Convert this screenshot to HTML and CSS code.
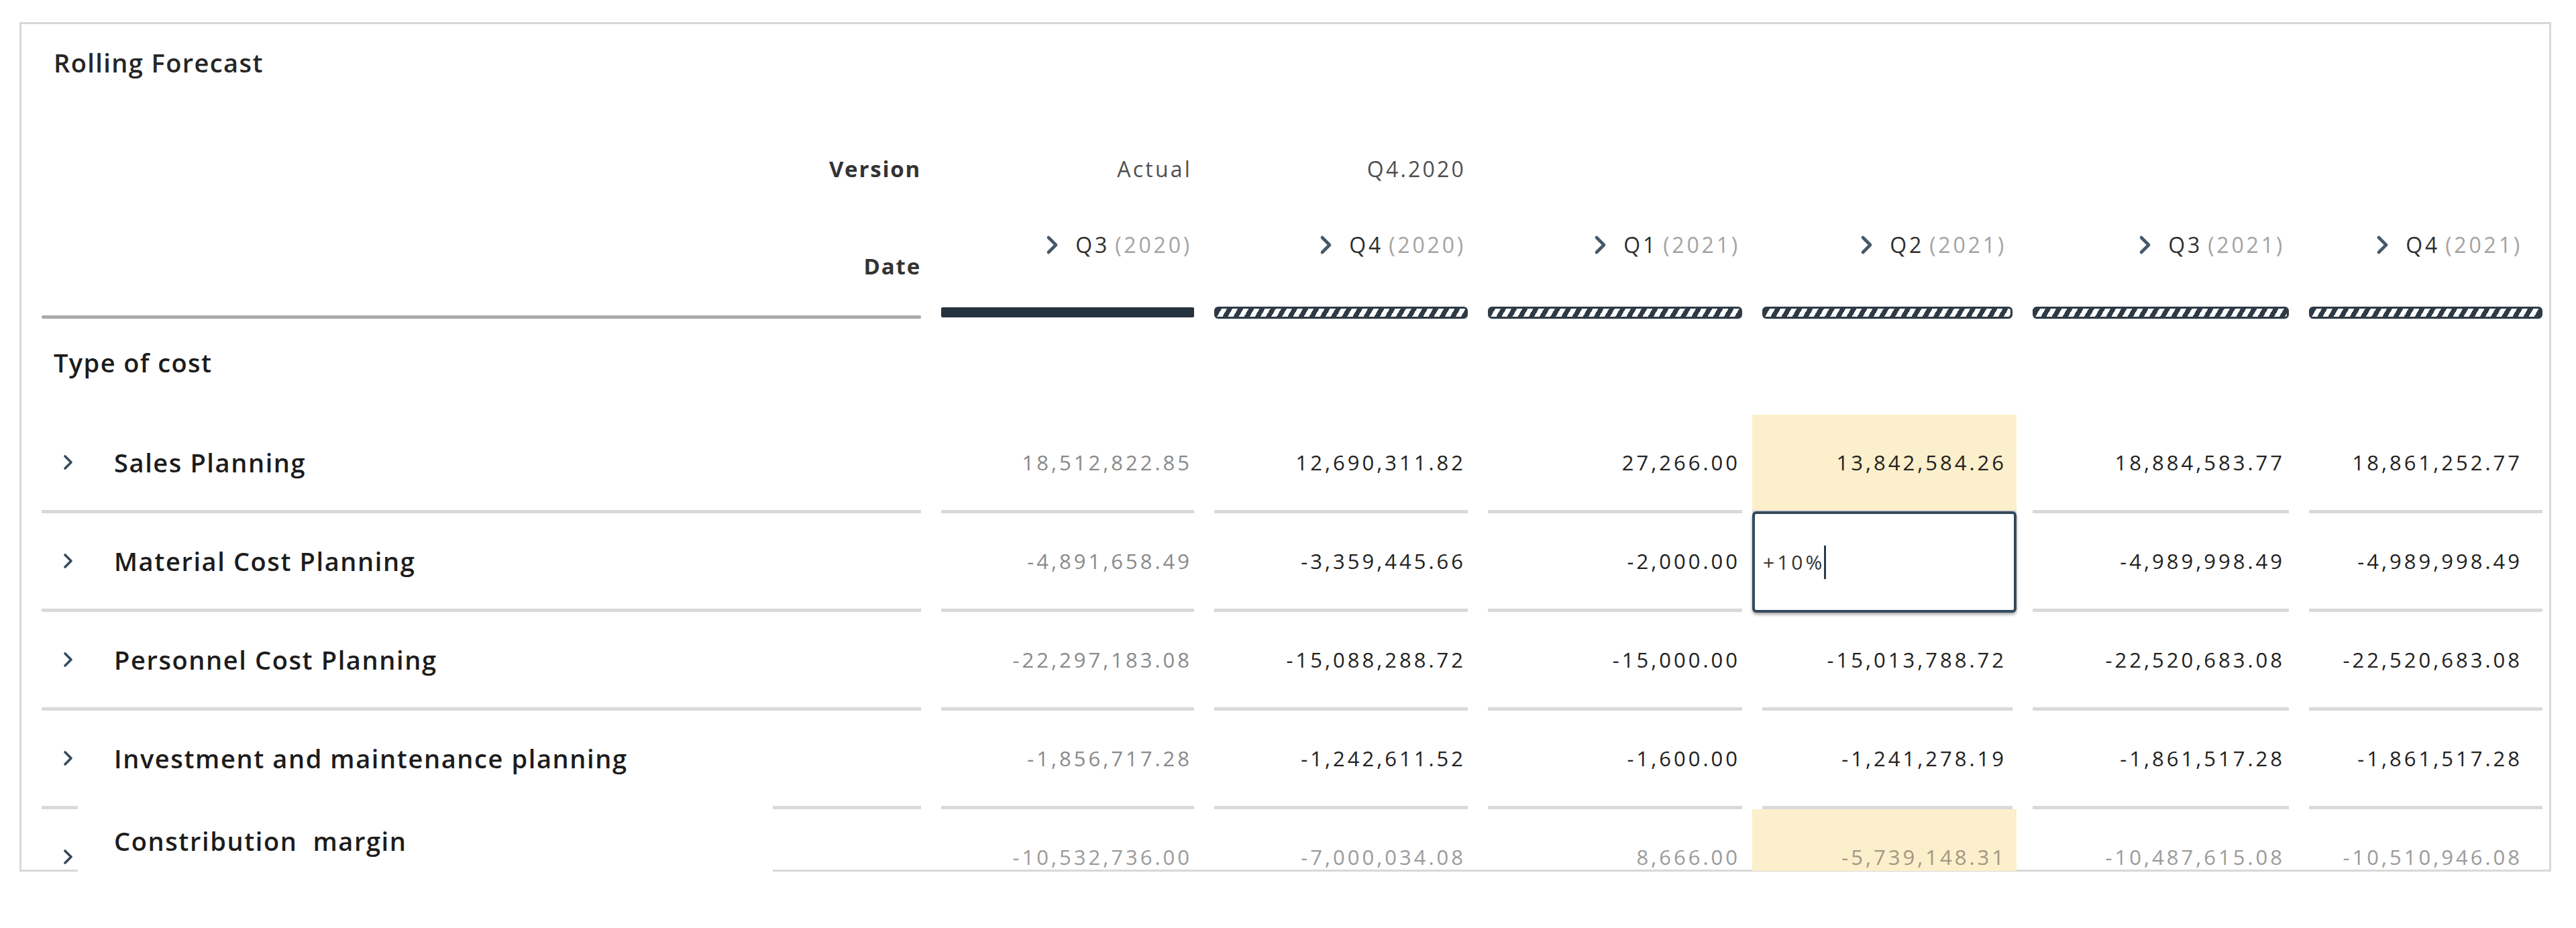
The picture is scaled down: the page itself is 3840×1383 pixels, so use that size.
FILE: index.html
```html
<!DOCTYPE html>
<html lang="en">
<head>
<meta charset="utf-8">
<title>Rolling Forecast</title>
<link rel="stylesheet" href="styles.css">
</head>
<body>
<div class="card">
  <div class="title">Rolling Forecast</div>

  <div class="grid version-row">
    <div class="dim-label">Version</div>
    <div class="hdr-val">Actual</div>
    <div class="hdr-val">Q4.2020</div>
    <div></div><div></div><div></div><div></div>
  </div>

  <div class="grid date-row">
    <div class="dim-label date-label">Date</div>
    <div class="date-hdr"><svg class="hchev" viewBox="0 0 20 30"><polyline points="4,4 15,15 4,26"/></svg><span class="q">Q3</span><span class="yr">(2020)</span></div>
    <div class="date-hdr"><svg class="hchev" viewBox="0 0 20 30"><polyline points="4,4 15,15 4,26"/></svg><span class="q">Q4</span><span class="yr">(2020)</span></div>
    <div class="date-hdr"><svg class="hchev" viewBox="0 0 20 30"><polyline points="4,4 15,15 4,26"/></svg><span class="q">Q1</span><span class="yr">(2021)</span></div>
    <div class="date-hdr"><svg class="hchev" viewBox="0 0 20 30"><polyline points="4,4 15,15 4,26"/></svg><span class="q">Q2</span><span class="yr">(2021)</span></div>
    <div class="date-hdr"><svg class="hchev" viewBox="0 0 20 30"><polyline points="4,4 15,15 4,26"/></svg><span class="q">Q3</span><span class="yr">(2021)</span></div>
    <div class="date-hdr"><svg class="hchev" viewBox="0 0 20 30"><polyline points="4,4 15,15 4,26"/></svg><span class="q">Q4</span><span class="yr">(2021)</span></div>
  </div>

  <div class="grid bar-row">
    <div class="label-rule"></div>
    <div class="bar solid"></div>
    <div class="bar hatched"></div>
    <div class="bar hatched"></div>
    <div class="bar hatched"></div>
    <div class="bar hatched"></div>
    <div class="bar hatched"></div>
  </div>

  <div class="grid type-row">
    <div class="type-label">Type of cost</div>
  </div>

  <div class="grid data-row">
    <div class="cell label"><svg class="chev" viewBox="0 0 24 28"><polyline points="8,5 17,14 8,23"/></svg><span>Sales Planning</span></div>
    <div class="cell num actual">18,512,822.85</div>
    <div class="cell num">12,690,311.82</div>
    <div class="cell num">27,266.00</div>
    <div class="cell num hl">13,842,584.26</div>
    <div class="cell num">18,884,583.77</div>
    <div class="cell num">18,861,252.77</div>
  </div>

  <div class="grid data-row">
    <div class="cell label"><svg class="chev" viewBox="0 0 24 28"><polyline points="8,5 17,14 8,23"/></svg><span>Material Cost Planning</span></div>
    <div class="cell num actual">-4,891,658.49</div>
    <div class="cell num">-3,359,445.66</div>
    <div class="cell num">-2,000.00</div>
    <div class="cell edit"><span class="edit-text">+10%</span><span class="caret"></span></div>
    <div class="cell num">-4,989,998.49</div>
    <div class="cell num">-4,989,998.49</div>
  </div>

  <div class="grid data-row">
    <div class="cell label"><svg class="chev" viewBox="0 0 24 28"><polyline points="8,5 17,14 8,23"/></svg><span>Personnel Cost Planning</span></div>
    <div class="cell num actual">-22,297,183.08</div>
    <div class="cell num">-15,088,288.72</div>
    <div class="cell num">-15,000.00</div>
    <div class="cell num">-15,013,788.72</div>
    <div class="cell num">-22,520,683.08</div>
    <div class="cell num">-22,520,683.08</div>
  </div>

  <div class="grid data-row">
    <div class="cell label"><svg class="chev" viewBox="0 0 24 28"><polyline points="8,5 17,14 8,23"/></svg><span>Investment and maintenance planning</span></div>
    <div class="cell num actual">-1,856,717.28</div>
    <div class="cell num">-1,242,611.52</div>
    <div class="cell num">-1,600.00</div>
    <div class="cell num">-1,241,278.19</div>
    <div class="cell num">-1,861,517.28</div>
    <div class="cell num">-1,861,517.28</div>
  </div>

  <div class="grid data-row last">
    <div class="cell label"><svg class="chev" viewBox="0 0 24 28"><polyline points="8,5 17,14 8,23"/></svg><span class="label-patch">Constribution  margin</span></div>
    <div class="cell num">-10,532,736.00</div>
    <div class="cell num">-7,000,034.08</div>
    <div class="cell num">8,666.00</div>
    <div class="cell num hl">-5,739,148.31</div>
    <div class="cell num">-10,487,615.08</div>
    <div class="cell num">-10,510,946.08</div>
  </div>
</div>
</body>
</html>
```

FILE: styles.css
```css
* { box-sizing: border-box; }

html, body {
  margin: 0;
  background: #ffffff;
}

body {
  font-family: "Open Sans", "Noto Sans", sans-serif;
  color: #1c1c1c;
}

.card {
  margin: 33px 0 0 29px;
  width: 3774px;
  border: 3px solid #d8d8d8;
  background: #ffffff;
  padding: 0 13px 0 30px;
}

.title {
  margin: 33px 0 0 18px;
  font-size: 38px;
  font-weight: 600;
  line-height: 48px;
  letter-spacing: 1.4px;
  color: #262626;
}

.grid {
  display: grid;
  grid-template-columns: 1311px 377px 378px 379px 373px 382px 348px;
  column-gap: 30px;
}

/* per-column right insets of the numbers (as measured) */
.grid > :nth-child(2),
.grid > :nth-child(3),
.grid > :nth-child(4) { padding-right: 3px; }
.grid > :nth-child(5) { padding-right: 9px; }
.grid > :nth-child(6) { padding-right: 6px; }
.grid > :nth-child(7) { padding-right: 30px; }

/* ---------- header ---------- */
.version-row {
  margin-top: 105px;
  height: 60px;
  align-items: center;
}

.dim-label {
  text-align: right;
  font-size: 33px;
  font-weight: 700;
  letter-spacing: 1.8px;
  line-height: 40px;
  color: #333333;
}

.hdr-val {
  text-align: right;
  font-size: 32px;
  line-height: 44px;
  letter-spacing: 3.2px;
  color: #505050;
}

.date-row {
  height: 135px;
}

.date-label {
  align-self: end;
}

.date-hdr {
  align-self: start;
  padding-top: 61px;
  display: flex;
  justify-content: flex-end;
  align-items: center;
  height: 105px;
  font-size: 32px;
  line-height: 44px;
  letter-spacing: 3.8px;
}

.hchev {
  width: 20px;
  height: 30px;
  margin-right: 24px;
}

.hchev polyline {
  fill: none;
  stroke: #47576a;
  stroke-width: 4.6;
  stroke-linecap: round;
  stroke-linejoin: round;
}

.q {
  color: #2e2e2e;
  margin-right: 8px;
}

.yr {
  color: #a3a3a3;
}

.bar-row {
  margin-top: 40px;
  height: 18px;
}

.label-rule {
  align-self: end;
  height: 5px;
  background: #a9a9a9;
  border-radius: 2px;
}

.bar {
  height: 18px;
}

.bar.solid {
  height: 15px;
  margin-top: 1px;
  background: #253340;
  border-radius: 2px;
}

.bar.hatched {
  border: 3px solid #2e3b47;
  border-radius: 6px;
  background: repeating-linear-gradient(120deg, #2e3b47 0 7px, #ffffff 7px 14px);
}

.type-row {
  height: 143px;
}

.type-label {
  padding: 41px 0 0 18px;
  font-size: 38px;
  font-weight: 600;
  line-height: 48px;
  letter-spacing: 1.4px;
  color: #1c1c1c;
}

/* ---------- body rows ---------- */
.data-row {
  height: 147px;
}

.cell {
  display: flex;
  align-items: center;
  border-bottom: 5px solid #d9d9d9;
}

.cell.label {
  padding-left: 27px;
  font-size: 38px;
  font-weight: 600;
  line-height: 48px;
  letter-spacing: 1.6px;
  color: #1c1c1c;
}

.chev {
  width: 24px;
  height: 28px;
  flex: none;
  margin-right: 57px;
}

.chev polyline {
  fill: none;
  stroke: #34495c;
  stroke-width: 3.6;
  stroke-linecap: round;
  stroke-linejoin: round;
}

.cell.num {
  justify-content: flex-end;
  font-size: 31px;
  line-height: 42px;
  letter-spacing: 4px;
  color: #222222;
}

.cell.num.actual {
  color: #8a8a8a;
}

.grid > .cell.hl {
  margin: 0 -6px 0 -15px;
  padding-right: 15px;
  background: #fcefcb;
}

.grid > .cell.edit {
  margin: -3px -6px -1px -15px;
  padding: 0 0 0 12px;
  border: 4px solid #34495b;
  border-radius: 6px;
  box-shadow: 0 3px 4px rgba(0, 0, 0, 0.35);
  background: #ffffff;
  justify-content: flex-start;
}

.edit-text {
  font-size: 30px;
  line-height: 40px;
  letter-spacing: 4px;
  color: #333333;
}

.caret {
  width: 3px;
  height: 50px;
  background: #2a3a48;
  margin-left: -1px;
}

/* last, partly cut-off row */
.data-row.last {
  height: 90px;
}

.data-row.last .cell {
  border-bottom: none;
  align-items: flex-start;
  padding-top: 50px;
}

.data-row.last .cell.num {
  color: #9b9b9b;
}

.data-row.last .cell.hl {
  color: #a39783;
}

.data-row.last .cell.label {
  position: relative;
  padding-top: 57px;
}

.label-patch {
  position: absolute;
  left: 54px;
  top: -8px;
  width: 1036px;
  height: 104px;
  padding: 31px 0 0 54px;
  background: #ffffff;
  white-space: pre;
}
```
